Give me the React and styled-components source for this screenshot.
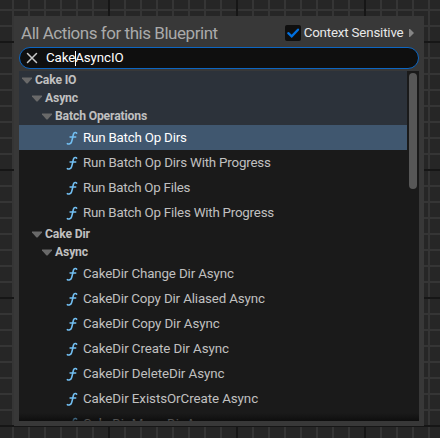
import React from 'react';
import styled, { createGlobalStyle } from 'styled-components';

const Global = createGlobalStyle`
  * { box-sizing: border-box; }
  body { margin: 0; overflow: hidden; font-family: Roboto, sans-serif; }
`;

const Graph = styled.main`
  width: 440px;
  height: 438px;
  padding: 16px 16px 12px 14px;
  background-color: #262626;
  background-image:
    linear-gradient(90deg, #161616 2px, transparent 2px),
    linear-gradient(#161616 2px, transparent 2px),
    linear-gradient(90deg, #353535 2px, transparent 2px),
    linear-gradient(#353535 2px, transparent 2px);
  background-size: 128px 128px, 128px 128px, 16px 16px, 16px 16px;
  background-position: 108px 0, 0 41px, 12px 0, 0 9px;
`;

const Panel = styled.section`
  width: 410px;
  height: 410px;
  padding: 0 5px 5px;
  background: #383838;
  display: flex;
  flex-direction: column;
`;

const Header = styled.header`
  height: 31px;
  padding: 2px 5px 0 2px;
  display: flex;
  align-items: center;
`;

const Title = styled.h1`
  margin: 0;
  flex: 1;
  font-size: 17px;
  font-weight: 400;
  line-height: 22px;
  letter-spacing: -0.46px;
  color: #aaa;
  white-space: nowrap;
`;

const Option = styled.label`
  display: flex;
  align-items: center;
  font-size: 13.33px;
  line-height: 16px;
  letter-spacing: -0.18px;
  color: #e8e8e8;
  white-space: nowrap;
`;

const CheckBox = styled.span`
  width: 16px;
  height: 16px;
  margin-right: 3px;
  border-radius: 2px;
  background: #0f0f0f;
  display: flex;
`;

const OptionArrow = styled.svg`
  margin-left: 5.5px;
`;

const Search = styled.div`
  height: 22px;
  flex: none;
  padding-left: 6px;
  border: 1px solid #0d66c2;
  border-radius: 11px;
  background: #0f0f0f;
  color: #fff;
  display: flex;
  align-items: center;
  font-size: 13.33px;
  line-height: 18px;
  letter-spacing: -0.1px;
`;

const Query = styled.span`
  margin-left: 8px;
  display: flex;
  align-items: center;
`;

const Caret = styled.span`
  width: 1px;
  height: 15px;
  margin-right: -1px;
  background: #fff;
`;

const List = styled.div`
  position: relative;
  height: 350px;
  margin-top: 2px;
  flex: none;
  display: flex;
  overflow: hidden;
  background: #1a1a1a;
`;

const Rows = styled.div`
  width: 388px;
`;

const Category = styled.div`
  height: 18px;
  padding-left: ${(p) => 3 + p.$depth * 10}px;
  display: flex;
  align-items: center;
  gap: 3px;
  background: ${(p) => (p.$tinted ? '#2c323a' : 'transparent')};
  color: #c0c0c0;
  font-size: 12.2px;
  font-weight: 700;
  line-height: 18px;
  letter-spacing: -0.16px;
  white-space: nowrap;
`;

const Action = styled.div`
  height: 25px;
  padding-left: 47px;
  display: flex;
  align-items: center;
  gap: 5px;
  background: ${(p) => (p.$selected ? '#40576f' : 'transparent')};
  color: ${(p) => (p.$selected ? '#fff' : '#c0c0c0')};
  font-size: 13.33px;
  line-height: 18px;
  letter-spacing: ${(p) => p.$tracking}px;
  white-space: nowrap;
`;

const Scrollbar = styled.div`
  width: 12px;
  padding: 2px;
`;

const Thumb = styled.div`
  height: 116px;
  border-radius: 4px;
  background: #575757;
`;

const Fade = styled.div`
  position: absolute;
  inset: auto 0 0 0;
  height: 8px;
  background: linear-gradient(rgba(10, 10, 10, 0), rgba(10, 10, 10, 0.35) 50%, rgba(10, 10, 10, 0.75));
`;

const Expander = () => (
  <svg width="10" height="7" viewBox="0 0 10 7">
    <path d="M0 .5h10v1L5.5 6.5h-1L0 1.5z" fill="#696969" />
  </svg>
);

const FunctionIcon = () => (
  <svg width="12" height="14" viewBox="0 0 12 14" fill="none" stroke="#72bff2" strokeLinecap="round">
    <path d="M10.6 2.2C10.1 1.2 8.2 1.2 7.6 2.8C7 4.4 6.3 8.9 5.5 11C4.9 12.9 2.9 13.5 1.4 12.7" strokeWidth="1.6" />
    <path d="M4 6H9.8" strokeWidth="1.3" />
  </svg>
);

const tree = [
  { text: 'Cake IO', depth: 0, tinted: true },
  { text: 'Async', depth: 1, tinted: true },
  { text: 'Batch Operations', depth: 2, tinted: true },
  { text: 'Run Batch Op Dirs', selected: true, tracking: -0.2 },
  { text: 'Run Batch Op Dirs With Progress', tracking: -0.19 },
  { text: 'Run Batch Op Files', tracking: -0.24 },
  { text: 'Run Batch Op Files With Progress', tracking: -0.22 },
  { text: 'Cake Dir', depth: 1 },
  { text: 'Async', depth: 2 },
  { text: 'CakeDir Change Dir Async', tracking: -0.13 },
  { text: 'CakeDir Copy Dir Aliased Async', tracking: -0.14 },
  { text: 'CakeDir Copy Dir Async', tracking: -0.1 },
  { text: 'CakeDir Create Dir Async', tracking: -0.07 },
  { text: 'CakeDir DeleteDir Async', tracking: -0.07 },
  { text: 'CakeDir ExistsOrCreate Async', tracking: -0.07 },
  { text: 'CakeDir Move Dir Async', tracking: -0.1 },
];

export default function App() {
  return (
    <Graph>
      <Global />
      <Panel>
        <Header>
          <Title>All Actions for this Blueprint</Title>
          <Option>
            <CheckBox>
              <svg width="16" height="16" viewBox="0 0 16 16">
                <path d="M3.3 8.2L6.7 11.4L13 4.7" fill="none" stroke="#0070e0" strokeWidth="2.3" strokeLinecap="round" />
              </svg>
            </CheckBox>
            Context Sensitive
            <OptionArrow width="5" height="8" viewBox="0 0 5 8">
              <path d="M0 0h1l4 4-4 4H0z" fill="#858585" />
            </OptionArrow>
          </Option>
        </Header>
        <Search>
          <svg width="12" height="12" viewBox="0 0 12 12">
            <path d="M1.5 1.5l9 9M10.5 1.5l-9 9" stroke="#c8c8c8" strokeWidth="1.5" strokeLinecap="round" />
          </svg>
          <Query>Cake<Caret />AsyncIO</Query>
        </Search>
        <List>
          <Rows>
            {tree.map((item, i) =>
              item.depth !== undefined ? (
                <Category key={i} $depth={item.depth} $tinted={item.tinted}>
                  <Expander />
                  {item.text}
                </Category>
              ) : (
                <Action key={i} $selected={item.selected} $tracking={item.tracking}>
                  <FunctionIcon />
                  {item.text}
                </Action>
              )
            )}
          </Rows>
          <Scrollbar>
            <Thumb />
          </Scrollbar>
          <Fade />
        </List>
      </Panel>
    </Graph>
  );
}
